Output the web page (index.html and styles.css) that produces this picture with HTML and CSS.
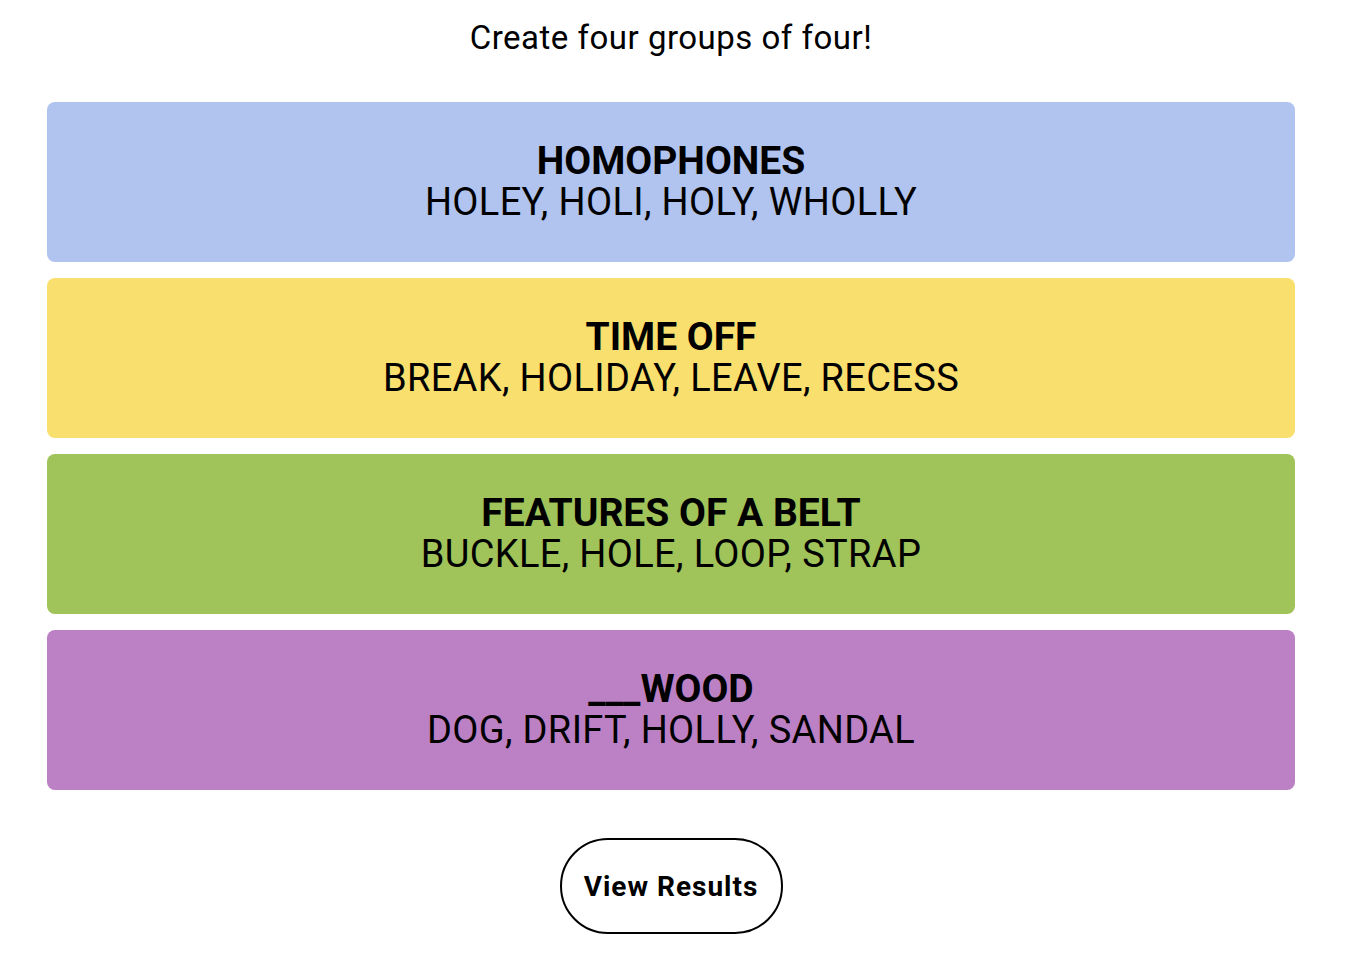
FILE: index.html
```html
<!DOCTYPE html>
<html>
<head>
<meta charset="utf-8">
<link rel="stylesheet" href="styles.css">
</head>
<body>
<main class="page">
  <h1 class="prompt">Create four groups of four!</h1>
  <section class="groups">
    <div class="group blue">
      <h3 class="group-title">HOMOPHONES</h3>
      <p class="group-words">HOLEY, HOLI, HOLY, WHOLLY</p>
    </div>
    <div class="group yellow">
      <h3 class="group-title">TIME OFF</h3>
      <p class="group-words">BREAK, HOLIDAY, LEAVE, RECESS</p>
    </div>
    <div class="group green">
      <h3 class="group-title">FEATURES OF A BELT</h3>
      <p class="group-words">BUCKLE, HOLE, LOOP, STRAP</p>
    </div>
    <div class="group purple">
      <h3 class="group-title">___WOOD</h3>
      <p class="group-words">DOG, DRIFT, HOLLY, SANDAL</p>
    </div>
  </section>
  <div class="actions">
    <button class="results-btn">View Results</button>
  </div>
</main>
</body>
</html>
```
FILE: styles.css
```css
* { box-sizing: border-box; }
html, body { margin: 0; padding: 0; background: #fff; }
body {
  font-family: "Roboto", "Liberation Sans", sans-serif;
  color: #000;
}
.page {
  display: flex;
  flex-direction: column;
  align-items: center;
  padding: 18px 51px 0 47px;
}
.prompt {
  margin: 0;
  font-weight: 400;
  font-size: 33px;
  line-height: 40px;
  letter-spacing: 0.5px;
}
.groups {
  width: 1248px;
  margin-top: 44px;
  display: flex;
  flex-direction: column;
  gap: 16px;
}
.group {
  height: 160px;
  border-radius: 8px;
  display: flex;
  flex-direction: column;
  justify-content: center;
  align-items: center;
  text-align: center;
}
.blue { background: #b0c4ef; }
.yellow { background: #f9df6d; }
.green { background: #a0c35a; }
.purple { background: #bc80c5; }
.group-title {
  margin: 0;
  font-size: 39px;
  line-height: 41px;
  font-weight: 700;
}
.group-words {
  margin: 0;
  font-size: 38px;
  line-height: 41px;
  font-weight: 400;
  letter-spacing: 0.35px;
}
.actions {
  margin-top: 48px;
  display: flex;
  justify-content: center;
}
.results-btn {
  width: 223px;
  height: 96px;
  border: 2px solid #000;
  border-radius: 48px;
  background: #fff;
  color: #000;
  font-family: "Roboto", "Liberation Sans", sans-serif;
  font-weight: 700;
  font-size: 28px;
  letter-spacing: 1px;
  padding: 0;
}
```
